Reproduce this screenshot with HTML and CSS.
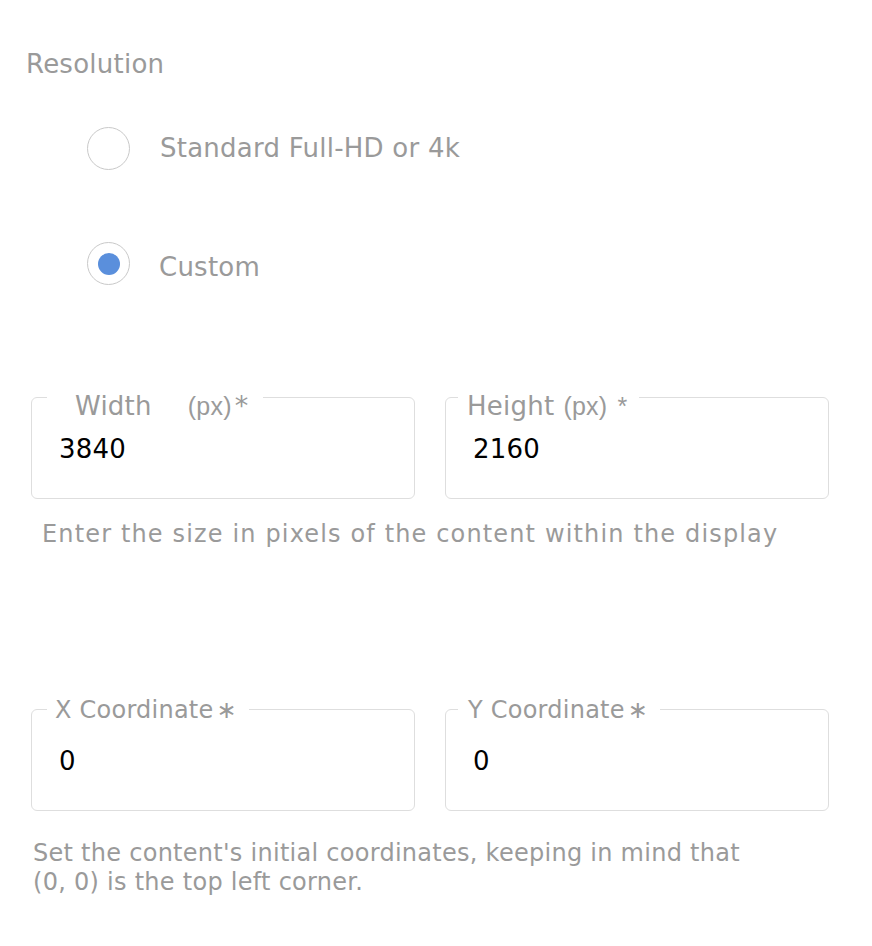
FILE: index.html
```html
<!DOCTYPE html>
<html lang="en">
<head>
<meta charset="utf-8">
<title>Resolution</title>
<link rel="stylesheet" href="styles.css">
</head>
<body>
<main class="page">
  <h2 class="section-title">Resolution</h2>

  <div class="radio-group">
    <label class="radio-row">
      <span class="radio"></span>
      <span class="radio-text radio-text--high">Standard Full-HD or 4k</span>
    </label>
    <label class="radio-row radio-row--second">
      <span class="radio radio--checked"><span class="radio-dot"></span></span>
      <span class="radio-text radio-text--low">Custom</span>
    </label>
  </div>

  <div class="field-row field-row--size">
    <div class="field">
      <span class="field-label field-label--width"><span class="lbl-main">Width</span><span class="lbl-unit">(px)</span><span class="lbl-star">*</span></span>
      <div class="field-value">3840</div>
    </div>
    <div class="field">
      <span class="field-label field-label--height"><span class="lbl-main">Height</span><span class="lbl-unit lbl-unit--near">(px)</span><span class="lbl-star lbl-star--arial">*</span></span>
      <div class="field-value">2160</div>
    </div>
  </div>
  <p class="helper helper--size">Enter the size in pixels of the content within the display</p>

  <div class="field-row field-row--coords">
    <div class="field">
      <span class="field-label field-label--coord"><span class="lbl-main lbl-main--small">X Coordinate</span><span class="lbl-op">∗</span></span>
      <div class="field-value">0</div>
    </div>
    <div class="field">
      <span class="field-label field-label--coord field-label--right"><span class="lbl-main lbl-main--small">Y Coordinate</span><span class="lbl-op">∗</span></span>
      <div class="field-value">0</div>
    </div>
  </div>
  <p class="helper helper--coords">Set the content's initial coordinates, keeping in mind that (0, 0) is the top left corner.</p>
</main>
</body>
</html>
```

FILE: styles.css
```css
* { box-sizing: border-box; }

html, body {
  margin: 0;
  padding: 0;
  background: #ffffff;
}

body {
  font-family: "DejaVu Sans", "Noto Sans", sans-serif;
  color: #9a9a9a;
  letter-spacing: 0.24px;
}

.page {
  width: 872px;
  padding: 0 0 0 26px;
}

.section-title {
  margin: 49px 0 0 0;
  font-size: 26px;
  line-height: 30px;
  font-weight: normal;
  color: #9a9a9a;
}

.radio-group {
  margin: 48px 0 0 61px;
  display: flex;
  flex-direction: column;
  gap: 72px;
}

.radio-row {
  display: flex;
  align-items: center;
  height: 43px;
  gap: 30px;
}

.radio {
  width: 43px;
  height: 43px;
  border: 1px solid #c9c9c9;
  border-radius: 50%;
  display: flex;
  align-items: center;
  justify-content: center;
  flex: none;
}

.radio-dot {
  width: 22px;
  height: 22px;
  border-radius: 50%;
  background: #5a8fdc;
}

.radio-text {
  font-size: 26px;
  line-height: 30px;
  color: #9a9a9a;
}

.radio-text--high {
  margin-top: -2px;
}

.radio-text--low {
  margin-top: 6px;
  margin-left: -1px;
}

.field-row {
  display: grid;
  grid-template-columns: 384px 384px;
  column-gap: 30px;
  margin-left: 5px;
}

.field-row--size { margin-top: 112px; }
.field-row--coords { margin-top: 161px; }

.field {
  position: relative;
  height: 102px;
  border: 1px solid #dedede;
  border-radius: 6px;
  padding: 36px 26px 0 27px;
}

.field-label {
  position: absolute;
  background: #ffffff;
  display: flex;
  align-items: baseline;
  white-space: nowrap;
  color: #9a9a9a;
}

.field-label--width {
  top: -7px;
  left: 15px;
  padding: 0 14px 0 28px;
  line-height: 30px;
}

.field-label--height {
  top: -7px;
  left: 12px;
  padding: 0 12px 0 9px;
  line-height: 30px;
}

.field-label--coord {
  top: -14px;
  left: 15px;
  padding: 0 12px 0 8px;
  line-height: 28px;
}

.field-label--right {
  left: 12px;
  padding-left: 10px;
}

.lbl-main {
  font-size: 26px;
}

.lbl-main--small {
  font-size: 24px;
}

.lbl-unit {
  font-family: "Liberation Sans", Arial, sans-serif;
  font-size: 25px;
  margin-left: 36px;
}

.lbl-unit--near {
  margin-left: 9px;
}

.lbl-star {
  font-size: 27px;
  margin-left: 3px;
}

.lbl-star--arial {
  font-family: "Liberation Sans", Arial, sans-serif;
  font-size: 25px;
  margin-left: 10px;
}

.lbl-op {
  font-size: 24px;
  margin-left: 3px;
}

.field-value {
  font-size: 26px;
  line-height: 30px;
  color: #000000;
}

.helper {
  margin: 0;
  color: #9a9a9a;
}

.helper--size {
  margin-top: 21px;
  margin-left: 16px;
  font-size: 24px;
  line-height: 28px;
  letter-spacing: 1.15px;
}

.helper--coords {
  margin-top: 28px;
  margin-left: 7px;
  max-width: 735px;
  font-size: 24px;
  line-height: 29px;
  letter-spacing: 0.27px;
}
```
